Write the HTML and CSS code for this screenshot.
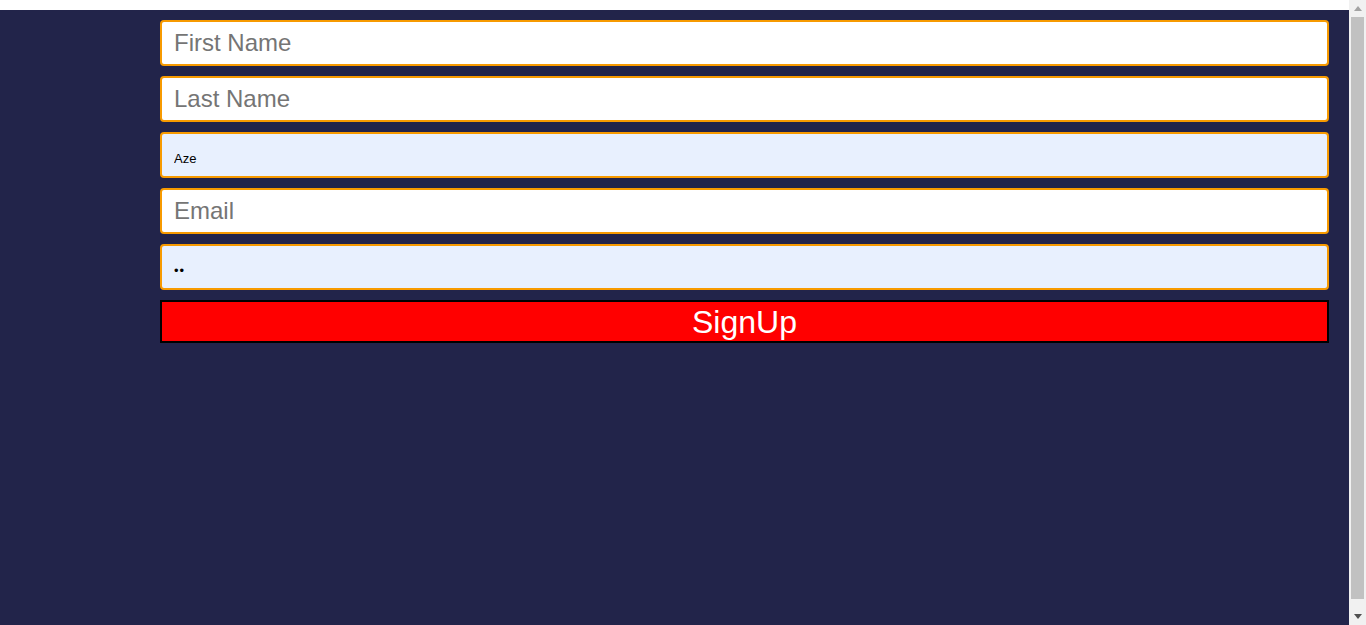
FILE: index.html
```html
<!DOCTYPE html>
<html lang="en">
<head>
<meta charset="utf-8">
<title>SignUp</title>
<link rel="stylesheet" href="styles.css">
</head>
<body>
<div class="page">
  <form class="signup">
    <input class="field" type="text" placeholder="First Name">
    <input class="field" type="text" placeholder="Last Name">
    <input class="field field--filled" type="text" value="Aze">
    <input class="field" type="email" placeholder="Email">
    <input class="field field--filled field--password" type="password" value="ab">
    <button class="submit" type="button">SignUp</button>
  </form>
</div>
<div class="scrollbar" aria-hidden="true">
  <div class="scrollbar__btn">
    <svg width="8" height="5" viewBox="0 0 8 5"><polygon points="0,5 8,5 4,0" fill="#a3a3a3"/></svg>
  </div>
  <div class="scrollbar__track"><div class="scrollbar__thumb"></div></div>
  <div class="scrollbar__btn">
    <svg width="8" height="5" viewBox="0 0 8 5"><polygon points="0,0 8,0 4,5" fill="#505050"/></svg>
  </div>
</div>
</body>
</html>
```

FILE: styles.css
```css
html, body {
  margin: 0;
  padding: 0;
  background: #ffffff;
}

.page {
  margin-top: 10px;
  min-height: calc(100vh - 10px);
  background: #22244a;
  padding: 10px 37px 0 160px;
  box-sizing: border-box;
}

.signup {
  display: flex;
  flex-direction: column;
  gap: 10px;
}

.field {
  box-sizing: border-box;
  height: 46px;
  width: 100%;
  margin: 0;
  border: 2px solid #f79a00;
  border-radius: 4px;
  background: #ffffff;
  padding: 0 12px;
  font-family: "Liberation Sans", Arial, sans-serif;
  font-size: 24px;
  color: #000000;
  outline: none;
}

.field::placeholder {
  color: #757575;
  opacity: 1;
}

.field--filled {
  background: #e8f0fe;
  font-size: 13px;
  padding-top: 6px;
}

.field--password {
  font-size: 13px;
  letter-spacing: 1px;
}

.submit {
  box-sizing: border-box;
  height: 43px;
  width: 100%;
  margin: 0;
  border: 2px solid #000000;
  border-radius: 0;
  background: #ff0000;
  color: #ffffff;
  font-family: "Liberation Sans", Arial, sans-serif;
  font-size: 32px;
  line-height: 1;
  padding: 0;
}

.scrollbar {
  position: fixed;
  top: 0;
  right: 0;
  bottom: 0;
  width: 17px;
  background: #f1f1f1;
  display: flex;
  flex-direction: column;
}

.scrollbar__btn {
  height: 17px;
  display: flex;
  align-items: center;
  justify-content: center;
  flex: none;
}

.scrollbar__btn svg {
  display: block;
}

.scrollbar__track {
  flex: 1;
  padding: 0 2px 9px 2px;
  display: flex;
}

.scrollbar__thumb {
  flex: 1;
  background: #c1c1c1;
}
```
